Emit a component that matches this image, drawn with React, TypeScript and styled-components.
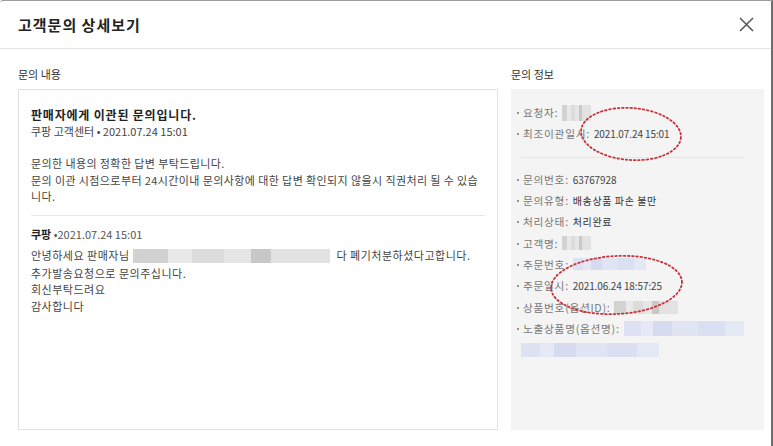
import styled, { createGlobalStyle } from "styled-components";

const GlobalStyle = createGlobalStyle`
  html, body {
    margin: 0;
    padding: 0;
    background: #ffffff;
  }
  body {
    font-family: "Noto Sans CJK KR", "Noto Sans", sans-serif;
    color: #333333;
  }
`;

const Modal = styled.div`
  width: 771px;
  height: 445px;
  border-top: 1px solid #9c9c9c;
  border-right: 2px solid #6e6e6e;
  border-top-left-radius: 3px;
  background: #ffffff;
  display: flex;
  flex-direction: column;
  overflow: hidden;
`;

const Header = styled.header`
  height: 47px;
  flex: none;
  display: flex;
  align-items: center;
  justify-content: space-between;
  padding: 0 18px;
  border-bottom: 1px solid #e4e4e4;
`;

const Title = styled.h1`
  margin: 0;
  font-size: 15px;
  font-weight: 700;
  color: #222222;
  letter-spacing: 1px;
`;

const CloseButton = styled.button`
  width: 20px;
  height: 20px;
  padding: 0;
  margin-right: -3px;
  border: 0;
  background: none;
  display: flex;
  align-items: center;
  justify-content: center;
  cursor: pointer;
`;

const Body = styled.div`
  display: flex;
  gap: 13px;
  padding: 17px 7px 0 18px;
`;

const Column = styled.section<{ $width: number }>`
  flex: none;
  width: ${(p) => p.$width}px;
  display: flex;
  flex-direction: column;
`;

const SectionLabel = styled.div`
  font-size: 11px;
  line-height: 16px;
  color: #333333;
  margin-bottom: 7px;
`;

const ContentBox = styled.div`
  height: 341px;
  box-sizing: border-box;
  border: 1px solid #e2e2e2;
  padding: 16px 12px 0 12px;
`;

const NoticeTitle = styled.div`
  font-size: 12px;
  line-height: 17px;
  font-weight: 700;
  color: #222222;
  letter-spacing: 0.8px;
`;

const Meta = styled.div`
  font-size: 11px;
  line-height: 16px;
  color: #444444;
`;

const Paragraph = styled.p`
  margin: 16px 0 0;
  font-size: 11px;
  line-height: 16.5px;
  letter-spacing: 0.4px;
  color: #444444;
`;

const Divider = styled.hr<{ $top: number; $bottom: number }>`
  border: 0;
  border-top: 1px solid #e6e6e6;
  margin: ${(p) => p.$top}px 0 ${(p) => p.$bottom}px;
`;

const ReplyHead = styled.div`
  font-size: 11px;
  line-height: 16px;
  color: #555555;
  b {
    color: #222222;
    font-weight: 700;
  }
`;

const ReplyText = styled.div`
  margin-top: 5px;
  font-size: 11px;
  line-height: 16.7px;
  letter-spacing: 0.5px;
  color: #444444;
`;

const Blur = styled.span<{ $w: number; $h: number; $tone: "gray" | "blue" }>`
  display: inline-block;
  width: ${(p) => p.$w}px;
  height: ${(p) => p.$h}px;
  vertical-align: middle;
  margin: 0 4px 2px 0;
  background: ${(p) =>
    p.$tone === "gray"
      ? "linear-gradient(90deg, #d2d2d2 0 18%, #e9e9e9 18% 30%, #dcdcdc 30% 46%, #e6e6e6 46% 60%, #c8c8c8 60% 70%, #e2e2e2 70% 100%)"
      : "linear-gradient(90deg, #dde1f1 0 14%, #e6e9f5 14% 24%, #d6dbef 24% 40%, #e1e5f3 40% 62%, #dadff1 62% 84%, #e4e7f4 84% 100%)"};
`;

const InfoBox = styled.div`
  position: relative;
  height: 341px;
  box-sizing: border-box;
  background: #f4f4f4;
  padding: 13px 20px 0 10px;
`;

const InfoList = styled.ul`
  list-style: none;
  margin: 0;
  padding: 0;
`;

const InfoItem = styled.li`
  display: flex;
  align-items: center;
  height: 21.3px;
  font-size: 10.7px;
  letter-spacing: 0.7px;
  color: #777777;
  white-space: nowrap;
  &::before {
    content: "";
    width: 2px;
    height: 2px;
    border-radius: 50%;
    background: #777777;
    margin: 1px 4px 0 -4px;
    flex: none;
  }
`;

const Value = styled.span<{ $strong?: boolean }>`
  margin-left: 4px;
  font-size: 10px;
  letter-spacing: -0.1px;
  color: ${(p) => (p.$strong ? "#333333" : "#444444")};
`;

const StrongValue = styled(Value)`
  letter-spacing: 0.6px;
`;

const InfoBlur = styled(Blur)`
  margin: 0 0 0 4px;
`;

const TailBlur = styled(Blur)`
  display: block;
  margin: 4px 0 0;
`;

const Annotation = styled.svg`
  position: absolute;
  overflow: visible;
  pointer-events: none;
`;

const Ellipse = ({ left, top, w, h, rot }: { left: number; top: number; w: number; h: number; rot: number }) => (
  <Annotation style={{ left, top }} width={w} height={h} viewBox={`0 0 ${w} ${h}`}>
    <ellipse
      cx={w / 2}
      cy={h / 2}
      rx={w / 2 - 1}
      ry={h / 2 - 1}
      transform={`rotate(${rot} ${w / 2} ${h / 2})`}
      fill="none"
      stroke="#c9323a"
      strokeWidth={1.8}
      strokeDasharray="1.6 2.6"
      strokeLinecap="round"
    />
  </Annotation>
);

export default function App() {
  return (
    <>
      <GlobalStyle />
      <Modal>
        <Header>
          <Title>고객문의 상세보기</Title>
          <CloseButton aria-label="닫기">
            <svg width="15" height="15" viewBox="0 0 15 15">
              <path d="M1 1 L14 14 M14 1 L1 14" stroke="#555" strokeWidth="1.5" fill="none" />
            </svg>
          </CloseButton>
        </Header>
        <Body>
          <Column $width={480}>
            <SectionLabel>문의 내용</SectionLabel>
            <ContentBox>
              <NoticeTitle>판매자에게 이관된 문의입니다.</NoticeTitle>
              <Meta>쿠팡 고객센터 • 2021.07.24 15:01</Meta>
              <Paragraph>
                문의한 내용의 정확한 답변 부탁드립니다.
                <br />
                문의 이관 시점으로부터 24시간이내 문의사항에 대한 답변 확인되지 않을시 직권처리 될 수 있습니다.
              </Paragraph>
              <Divider $top={10} $bottom={10} />
              <ReplyHead>
                <b>쿠팡</b> •2021.07.24 15:01
              </ReplyHead>
              <ReplyText>
                안녕하세요 판매자님 <Blur $w={197} $h={14} $tone="gray" /> 다 폐기처분하셨다고합니다.
                <br />
                추가발송요청으로 문의주십니다.
                <br />
                회신부탁드려요
                <br />
                감사합니다
              </ReplyText>
            </ContentBox>
          </Column>
          <Column $width={253}>
            <SectionLabel>문의 정보</SectionLabel>
            <InfoBox>
              <InfoList>
                <InfoItem>
                  요청자: <InfoBlur $w={29} $h={16} $tone="gray" />
                </InfoItem>
                <InfoItem>
                  최조이관일시: <Value>2021.07.24 15:01</Value>
                </InfoItem>
              </InfoList>
              <Divider $top={12} $bottom={11} />
              <InfoList>
                <InfoItem>
                  문의번호: <Value>63767928</Value>
                </InfoItem>
                <InfoItem>
                  문의유형: <StrongValue $strong>배송상품 파손 불만</StrongValue>
                </InfoItem>
                <InfoItem>
                  처리상태: <StrongValue $strong>처리완료</StrongValue>
                </InfoItem>
                <InfoItem>
                  고객명: <InfoBlur $w={29} $h={14} $tone="gray" />
                </InfoItem>
                <InfoItem>
                  주문번호: <InfoBlur $w={73} $h={12} $tone="blue" />
                </InfoItem>
                <InfoItem>
                  주문일시: <Value>2021.06.24 18:57:25</Value>
                </InfoItem>
                <InfoItem>
                  상품번호(옵션ID): <InfoBlur $w={64} $h={13} $tone="gray" />
                </InfoItem>
                <InfoItem>
                  노출상품명(옵션명): <InfoBlur $w={128} $h={15} $tone="blue" />
                </InfoItem>
              </InfoList>
              <TailBlur $w={138} $h={14} $tone="blue" />
              <Ellipse left={69} top={18} w={102} h={54} rot={4} />
              <Ellipse left={39} top={166} w={133} h={60} rot={-3} />
            </InfoBox>
          </Column>
        </Body>
      </Modal>
    </>
  );
}
